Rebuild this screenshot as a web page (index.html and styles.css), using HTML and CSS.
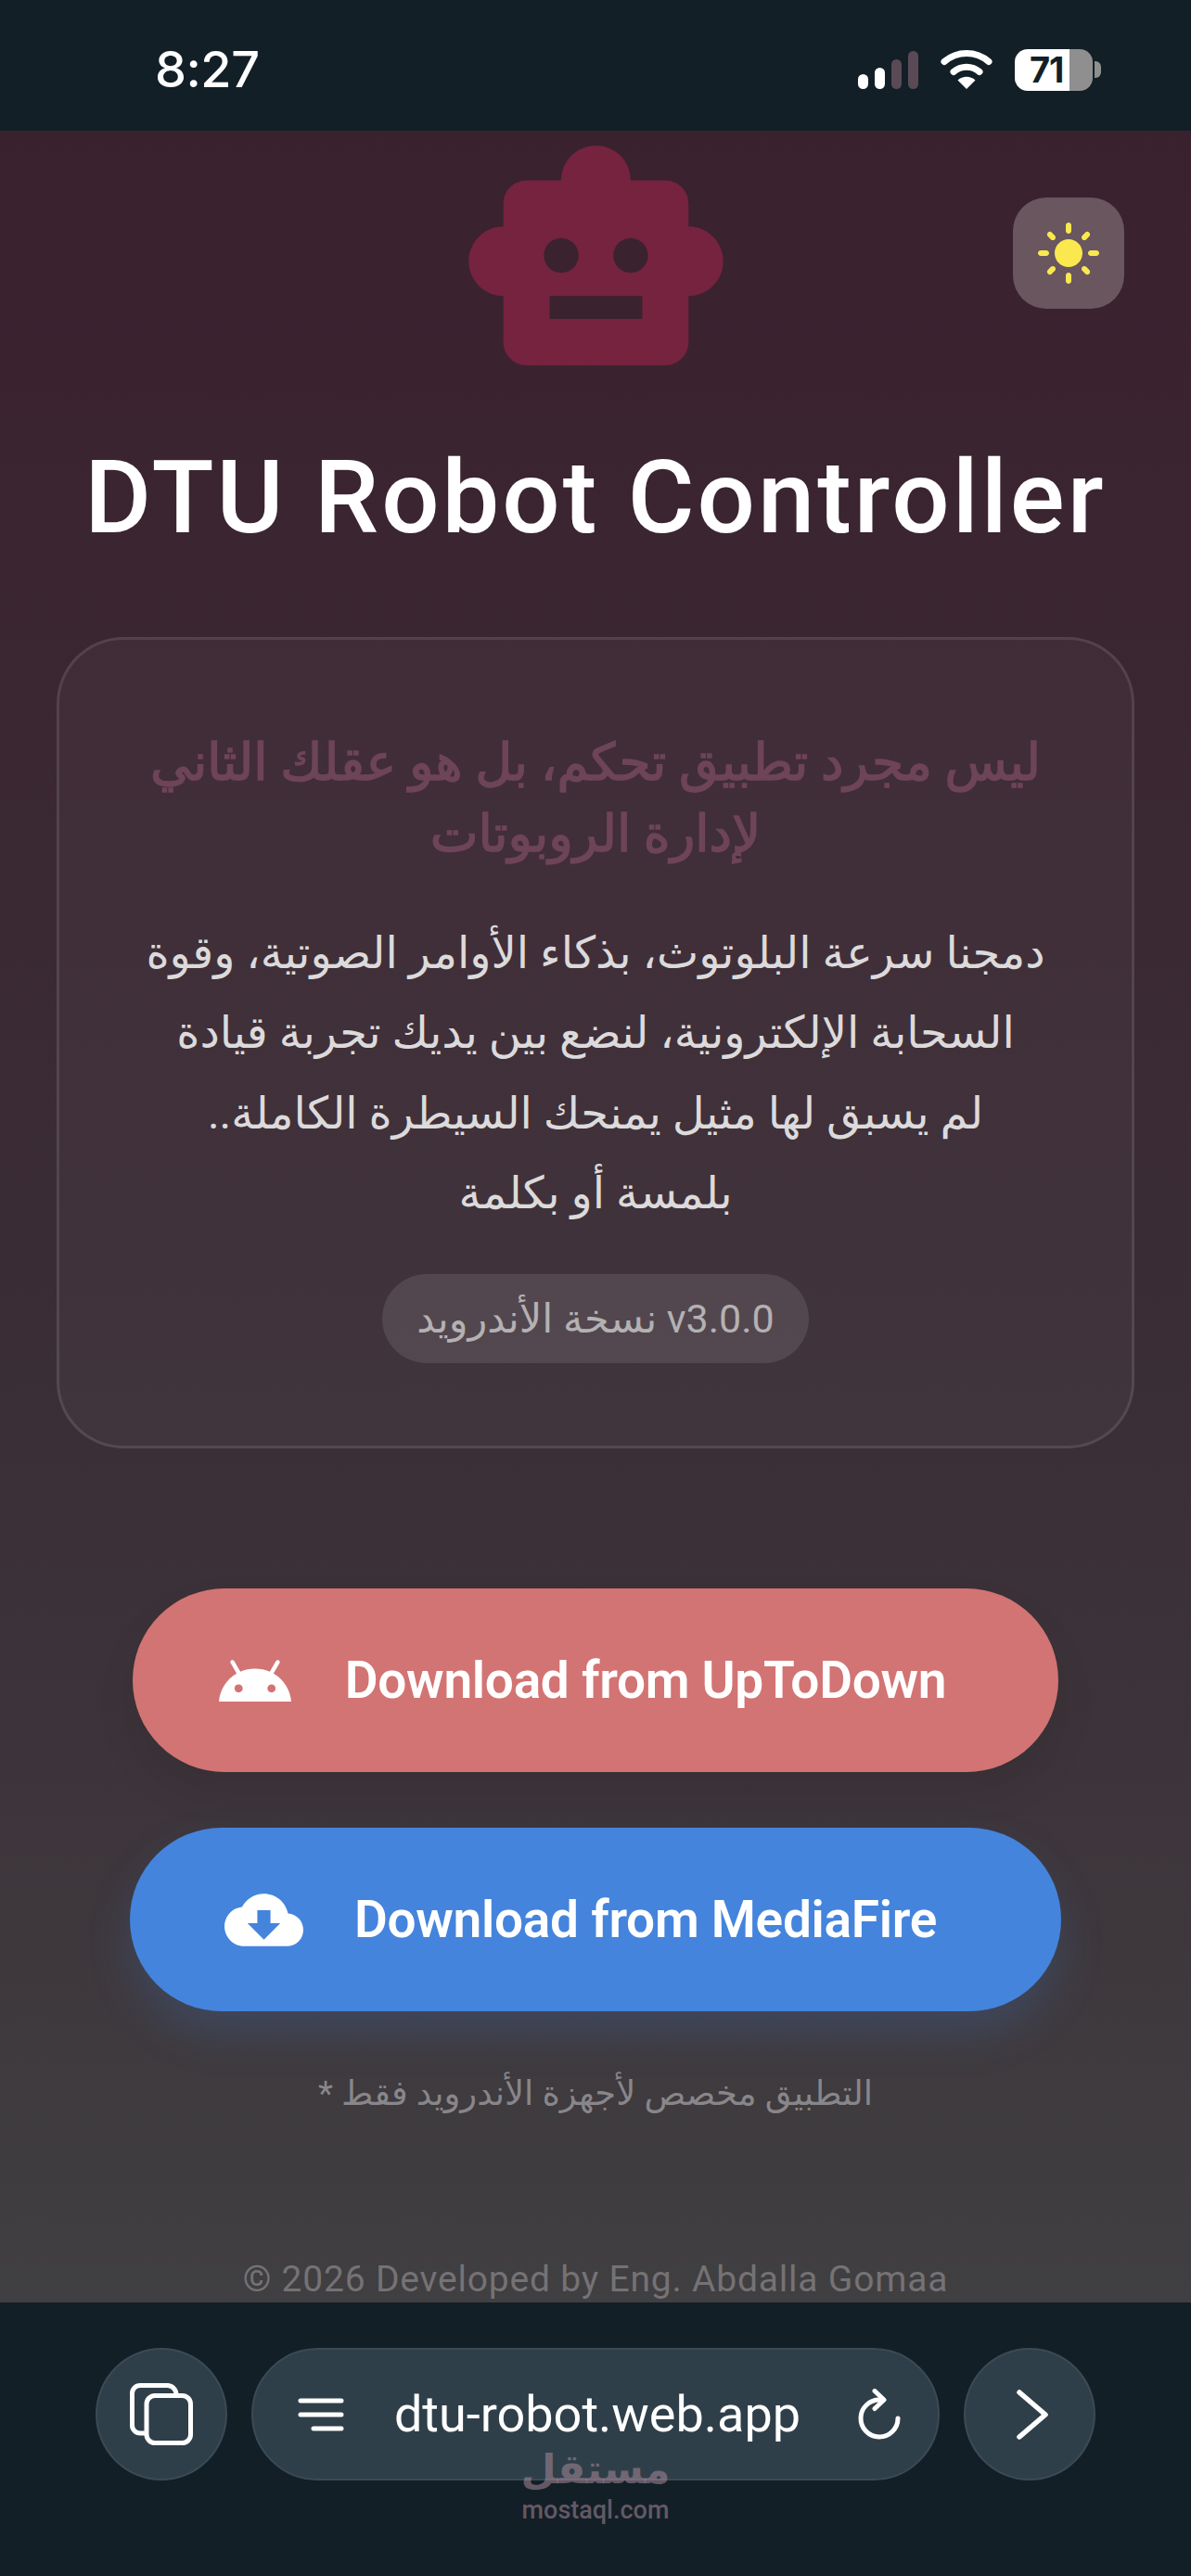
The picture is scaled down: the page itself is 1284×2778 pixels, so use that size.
FILE: index.html
```html
<!DOCTYPE html>
<html lang="ar">
<head>
<meta charset="utf-8">
<title>DTU Robot Controller</title>
<link rel="stylesheet" href="styles.css">
</head>
<body>
<header class="status">
  <span class="time" dir="ltr">8:27</span>
  <div class="status-icons">
    <div class="signal"><i class="bar b1"></i><i class="bar b2"></i><i class="bar b3 off"></i><i class="bar b4 off"></i></div>
    <svg class="wifi" viewBox="0 0 56 42"><path d="M4 12.5C18 .5 38 .5 52 12.5" fill="none" stroke="#fff" stroke-width="7" stroke-linecap="round"/><path d="M14 23.5C22 16.5 34 16.5 42 23.5" fill="none" stroke="#fff" stroke-width="7" stroke-linecap="round"/><path d="M28 42L18.500 32.500C24 27.500 32 27.500 37.500 32.500Z" fill="#fff"/></svg>
    <div class="battery"><div class="battery-body"><span class="battery-num">71</span></div><i class="battery-cap"></i></div>
  </div>
</header>

<main class="page">
  <div class="hero">
    <svg class="robot" viewBox="1 2 22 19"><path d="M20,9V7c0-1.1-0.9-2-2-2h-3c0-1.66-1.34-3-3-3S9,3.34,9,5H6C4.9,5,4,5.9,4,7v2c-1.66,0-3,1.34-3,3s1.34,3,3,3v4c0,1.1,0.9,2,2,2h12c1.1,0,2-0.9,2-2v-4c1.66,0,3-1.34,3-3S21.66,9,20,9z M7.500,11.500C7.500,10.670,8.170,10,9,10s1.500,0.670,1.500,1.500S9.830,13,9,13S7.500,12.330,7.500,11.500z M16,17H8v-2h8V17z M15,13c-0.830,0-1.500-0.670-1.500-1.500S14.170,10,15,10s1.500,0.670,1.500,1.500S15.830,13,15,13z"/></svg>
    <button class="theme" type="button" aria-label="theme">
      <svg class="sun" viewBox="0 0 24 24"><path d="M12,7c-2.760,0-5,2.240-5,5s2.240,5,5,5s5-2.240,5-5S14.760,7,12,7L12,7z M2,13l2,0c0.550,0,1-0.450,1-1s-0.450-1-1-1l-2,0c-0.550,0-1,0.450-1,1S1.450,13,2,13z M20,13l2,0c0.550,0,1-0.450,1-1s-0.450-1-1-1l-2,0c-0.550,0-1,0.450-1,1S19.450,13,20,13z M11,2v2c0,0.550,0.450,1,1,1s1-0.450,1-1V2c0-0.550-0.450-1-1-1S11,1.450,11,2z M11,20v2c0,0.550,0.450,1,1,1s1-0.450,1-1v-2c0-0.550-0.450-1-1-1C11.450,19,11,19.450,11,20z M5.990,4.580c-0.390-0.390-1.030-0.390-1.410,0c-0.390,0.390-0.390,1.030,0,1.410l1.060,1.060c0.390,0.390,1.030,0.390,1.410,0s0.390-1.030,0-1.410L5.990,4.580z M18.360,16.950c-0.390-0.390-1.030-0.390-1.410,0c-0.390,0.390-0.390,1.030,0,1.410l1.060,1.060c0.390,0.390,1.030,0.390,1.410,0c0.390-0.390,0.390-1.030,0-1.410L18.360,16.950z M19.420,5.990c0.390-0.390,0.390-1.030,0-1.410c-0.390-0.390-1.030-0.390-1.410,0l-1.060,1.060c-0.390,0.390-0.390,1.030,0,1.410s1.030,0.390,1.410,0L19.420,5.990z M7.050,18.360c0.390-0.390,0.390-1.030,0-1.410c-0.390-0.390-1.030-0.390-1.410,0l-1.060,1.060c-0.390,0.390-0.390,1.030,0,1.410s1.030,0.390,1.410,0L7.050,18.360z"/></svg>
    </button>
  </div>

  <h1 class="title" dir="ltr">DTU Robot Controller</h1>

  <section class="card" dir="rtl">
    <h2 class="tagline">ليس مجرد تطبيق تحكم، بل هو عقلك الثاني<br>لإدارة الروبوتات</h2>
    <p class="desc">دمجنا سرعة البلوتوث، بذكاء الأوامر الصوتية، وقوة<br>السحابة الإلكترونية، لنضع بين يديك تجربة قيادة<br>لم يسبق لها مثيل يمنحك السيطرة الكاملة..<br>بلمسة أو بكلمة</p>
    <span class="chip">v3.0.0 نسخة الأندرويد</span>
  </section>

  <div class="actions">
    <a class="btn btn-red" href="#">
      <svg class="btn-icon android" viewBox="1 5.300 22 12.700"><path d="M17.600 9.480l1.840-3.180c.16-.31.04-.69-.26-.85-.29-.15-.65-.06-.83.22l-1.880 3.240c-2.860-1.210-6.080-1.210-8.940 0L5.650 5.670c-.19-.29-.58-.38-.87-.2-.28.18-.37.54-.22.83L6.400 9.480C3.300 11.250 1.280 14.440 1 18h22c-.28-3.560-2.300-6.750-5.400-8.520zM7 15.250c-.69 0-1.250-.56-1.250-1.250s.56-1.250 1.250-1.250 1.250.56 1.250 1.250-.56 1.250-1.250 1.250zm10 0c-.69 0-1.250-.56-1.250-1.250s.56-1.250 1.250-1.250 1.250.56 1.250 1.250-.56 1.250-1.250 1.250z"/></svg>
      <span>Download from UpToDown</span>
    </a>
    <a class="btn btn-blue" href="#">
      <svg class="btn-icon cloud" viewBox="0 4 24 16"><path d="M19.350 10.040C18.670 6.590 15.640 4 12 4 9.110 4 6.600 5.640 5.350 8.040 2.340 8.360 0 10.910 0 14c0 3.310 2.690 6 6 6h13c2.760 0 5-2.240 5-5 0-2.640-2.050-4.780-4.650-4.960zM17 13l-5 5-5-5h3V9h4v4h3z"/></svg>
      <span>Download from MediaFire</span>
    </a>
    <p class="note" dir="rtl">التطبيق مخصص لأجهزة الأندرويد فقط *</p>
  </div>

  <footer class="copy" dir="ltr">© 2026 Developed by Eng. Abdalla Gomaa</footer>
</main>

<nav class="browser">
  <div class="browser-row">
    <div class="round">
      <svg class="tabs" viewBox="0 0 68 67" fill="none" stroke="#fff" stroke-width="5"><path d="M16 54H11a8.500 8.500 0 0 1-8.500-8.500V11A8.500 8.500 0 0 1 11 2.500H41A10 10 0 0 1 50 13"/><rect x="18" y="13.500" width="47.500" height="51" rx="9"/></svg>
    </div>
    <div class="url-pill">
      <svg class="menu" viewBox="0 0 50 36" fill="none" stroke="#fff" stroke-width="5" stroke-linecap="round"><path d="M3 3H47M3 18H47M17 33H47"/></svg>
      <span class="url">dtu-robot.web.app</span>
      <svg class="reload" viewBox="0 0 46 56" fill="none" stroke="#fff" stroke-width="5" stroke-linecap="round" stroke-linejoin="round"><path d="M24 12A20 20 0 1 0 43 32"/><path d="M18 2.500L28 12L18 21.500"/></svg>
    </div>
    <div class="round">
      <svg class="chev" viewBox="0 0 34 54" fill="none" stroke="#fff" stroke-width="5.500" stroke-linecap="round" stroke-linejoin="round"><path d="M3 3L31 27L3 51"/></svg>
    </div>
  </div>
  <div class="watermark">
    <span class="wm-ar" dir="rtl">مستقل</span>
    <span class="wm-en">mostaql.com</span>
  </div>
</nav>
</body>
</html>
```

FILE: styles.css
```css
* { box-sizing: border-box; }
html, body { margin: 0; padding: 0; }
body {
  width: 1284px;
  height: 2778px;
  display: flex;
  flex-direction: column;
  overflow: hidden;
  background: #131f27;
  font-family: Roboto, "Noto Sans", "DejaVu Sans", sans-serif;
  color: #fff;
}

/* status bar */
.status {
  height: 141px;
  flex: none;
  display: flex;
  justify-content: space-between;
  align-items: center;
  padding: 9px 97px 0 167px;
  background: #131f27;
}
.time { font: 500 54px/1 Inter, Roboto, sans-serif; letter-spacing: -0.5px; }
.status-icons { display: flex; align-items: center; gap: 24px; }
.signal { display: flex; align-items: flex-end; gap: 7px; height: 41px; }
.bar { display: block; width: 11px; border-radius: 6px; background: #fff; }
.b1 { height: 16px; }
.b2 { height: 23px; }
.b3 { height: 32px; }
.b4 { height: 41px; }
.bar.off { background: #5a4a56; }
.wifi { width: 56px; height: 42px; }
.battery { display: flex; align-items: center; gap: 2px; }
.battery-body {
  width: 84px;
  height: 45px;
  border-radius: 14px;
  background: linear-gradient(90deg, #fff 0 70%, #8f8f8f 70% 100%);
  display: flex;
  align-items: center;
  padding-left: 16px;
}
.battery-num { font: 700 38px/1 Inter, Roboto, sans-serif; color: #131f27; letter-spacing: -1px; }
.battery-cap { display: block; width: 7px; height: 18px; border-radius: 0 6px 6px 0; background: #8f8f8f; }

/* page */
.page {
  flex: 1;
  display: flex;
  flex-direction: column;
  align-items: center;
  background: linear-gradient(180deg, #3a212e 0%, #3a2d35 55%, #3c3239 70%, #403f41 100%);
}
.hero {
  position: relative;
  width: 100%;
  display: flex;
  justify-content: center;
  padding-top: 16px;
}
.robot { width: 275px; height: 237px; fill: #75233f; display: block; }
.theme {
  position: absolute;
  top: 72px;
  left: 1092px;
  width: 120px;
  height: 120px;
  padding: 0;
  border: 0;
  border-radius: 36px;
  background: #69565f;
  display: flex;
  align-items: center;
  justify-content: center;
}
.sun { width: 72px; height: 72px; fill: #fbe84f; }

.title {
  margin: 81px 0 0;
  font: 500 110px/124px Roboto, sans-serif;
  letter-spacing: 3px;
  text-align: center;
  white-space: nowrap;
}

/* card */
.card {
  width: 1162px;
  height: 875px;
  margin-top: 88px;
  padding: 94px 60px 0;
  border: 3px solid rgba(255, 255, 255, .1);
  border-radius: 72px;
  background: rgba(255, 255, 255, .03);
  display: flex;
  flex-direction: column;
  align-items: center;
  text-align: center;
}
.tagline {
  margin: 0;
  font-size: 55px;
  font-weight: 400;
  line-height: 77px;
  color: #6e4459;
  -webkit-text-stroke: 1.500px #6e4459;
  white-space: nowrap;
}
.desc {
  margin: 47px 0 0;
  font-size: 48px;
  line-height: 86.400px;
  color: #dcdadb;
  white-space: nowrap;
}
.chip {
  margin-top: 43px;
  height: 96px;
  padding: 0 37px;
  display: flex;
  align-items: center;
  border-radius: 48px;
  background: rgba(255, 255, 255, .1);
  font-size: 43px;
  color: #b4b1b3;
  white-space: nowrap;
}

/* buttons */
.actions {
  width: 100%;
  margin-top: 151px;
  display: flex;
  flex-direction: column;
  align-items: center;
}
.btn {
  height: 198px;
  border-radius: 99px;
  display: flex;
  align-items: center;
  justify-content: center;
  color: #fff;
  text-decoration: none;
  font-size: 55px;
  font-weight: 600;
  letter-spacing: -0.3px;
  white-space: nowrap;
}
.btn-red {
  width: 998px;
  gap: 58px;
  padding-right: 28px;
  background: #d27473;
  box-shadow: 0 24px 45px rgba(0, 0, 0, .08);
}
.btn-blue {
  width: 1004px;
  gap: 55px;
  padding-right: 32px;
  margin-top: 60px;
  background: #4484dd;
  box-shadow: 0 24px 48px rgba(68, 132, 221, .2);
}
.btn-icon { fill: #fff; display: block; flex: none; }
.android { width: 78px; height: 45px; }
.cloud { width: 85px; height: 57px; }
.note {
  margin: 67px 0 0;
  font-size: 37px;
  line-height: 44px;
  color: #88868a;
}

.copy {
  margin-top: 156px;
  font-size: 39px;
  line-height: 44px;
  letter-spacing: 0.8px;
  color: #757275;
}

/* browser bar */
.browser {
  position: relative;
  height: 295px;
  flex: none;
  background: #131f27;
  padding-top: 49px;
}
.browser-row {
  display: flex;
  justify-content: center;
  gap: 26px;
}
.round {
  width: 142px;
  height: 143px;
  border-radius: 50%;
  background: #2f3f4a;
  border: 2px solid #3c4a55;
  display: flex;
  align-items: center;
  justify-content: center;
  flex: none;
}
.tabs { width: 68px; height: 67px; }
.chev { width: 34px; height: 54px; margin-left: 6px; }
.url-pill {
  width: 742px;
  height: 143px;
  border-radius: 72px;
  background: #2f3f4a;
  border: 2px solid #3c4a55;
  display: flex;
  align-items: center;
  padding: 0 40px 0 48px;
  justify-content: space-between;
}
.menu { width: 50px; height: 36px; }
.reload { width: 46px; height: 56px; }
.url { font: 400 54px/1 Roboto, sans-serif; margin-right: 8px; }
.watermark {
  position: absolute;
  left: 542px;
  top: 152px;
  width: 200px;
  display: flex;
  flex-direction: column;
  align-items: center;
  color: rgba(170, 140, 155, .55);
}
.wm-ar { font-size: 44px; font-weight: 700; line-height: 56px; }
.wm-en { font-size: 27px; font-weight: 500; line-height: 32px; }
```
